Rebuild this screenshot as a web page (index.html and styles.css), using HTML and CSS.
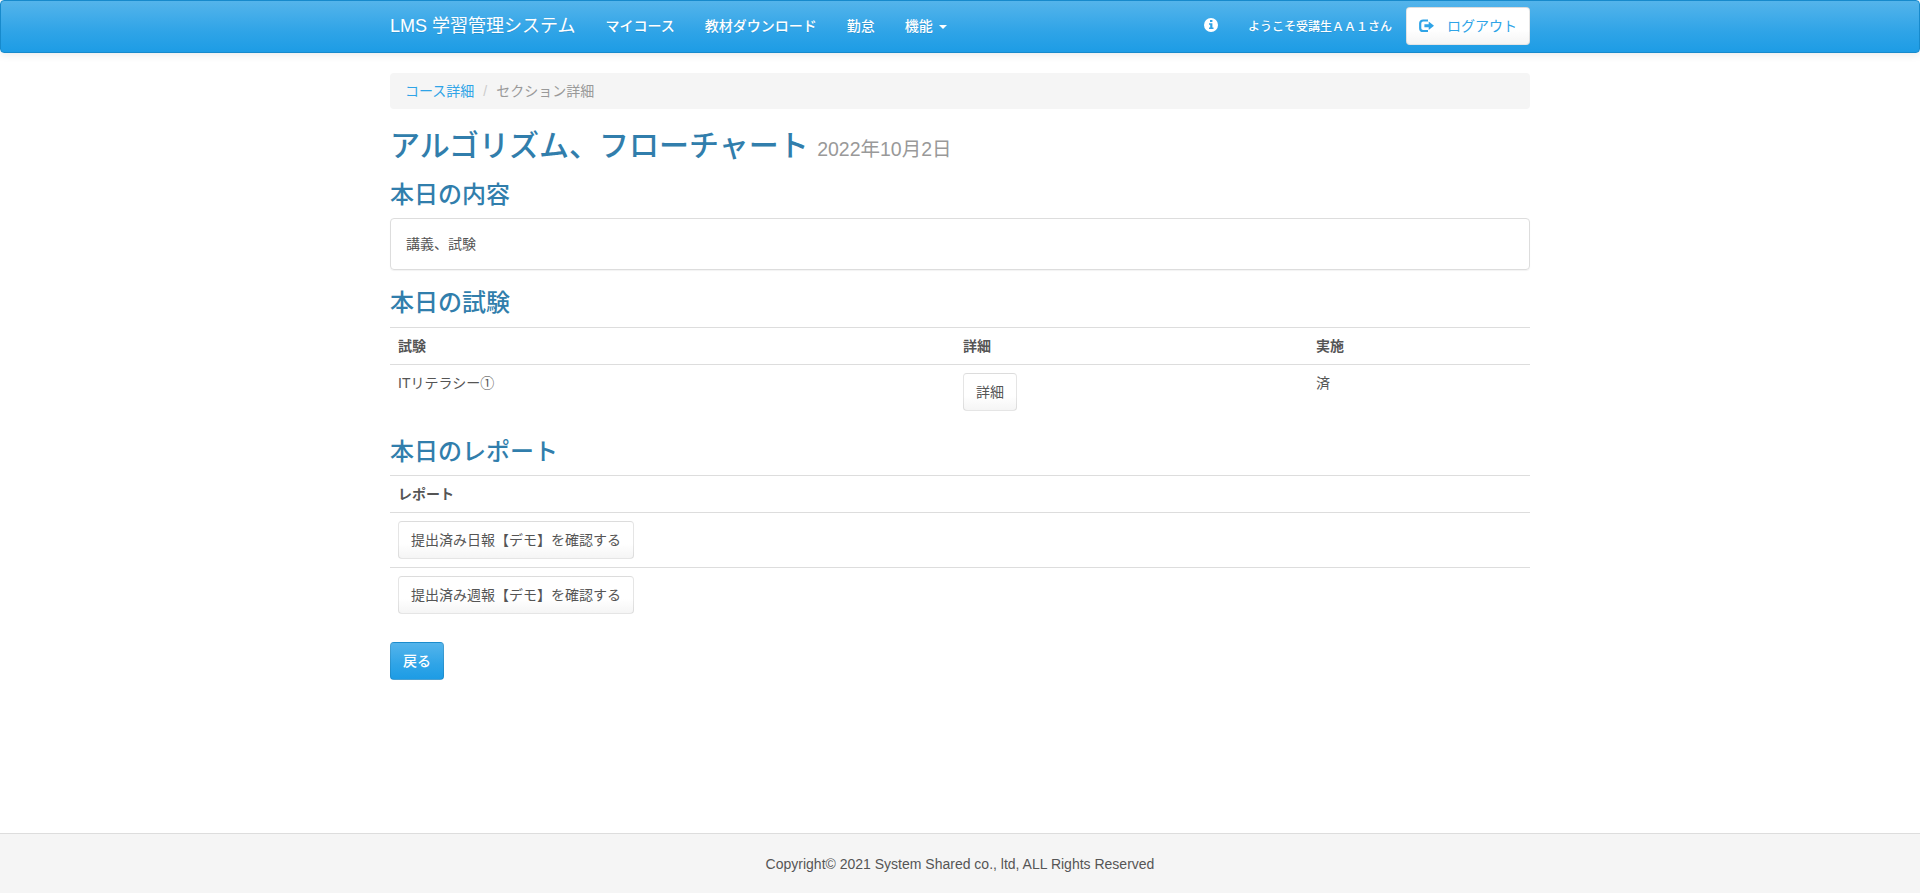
FILE: index.html
```html
<!DOCTYPE html>
<html lang="ja">
<head>
<meta charset="utf-8">
<title>セクション詳細 | LMS 学習管理システム</title>
<link rel="stylesheet" href="styles.css">
</head>
<body>
<nav class="navbar">
  <div class="container navbar-inner">
    <a class="brand">LMS 学習管理システム</a>
    <ul class="nav">
      <li><a>マイコース</a></li>
      <li><a>教材ダウンロード</a></li>
      <li><a>勤怠</a></li>
      <li><a>機能 <b class="caret"></b></a></li>
    </ul>
    <div class="nav-right">
      <svg class="icon info" viewBox="0 0 14 14"><circle cx="7" cy="7" r="7" fill="#fff"/><path d="M6 2h2.400v2H6zM5 5.200h3.400v4.200H9.500V11H5V9.400h1.200V6.800H5z" fill="#2fa4e7"/></svg>
      <span class="welcome">ようこそ受講生ＡＡ１さん</span>
      <a class="btn btn-logout"><svg class="icon" viewBox="0 0 15 14"><path d="M9 1.500H4.200Q1.200 1.500 1.200 4.300v4.900q0 2.800 3 2.800H9" fill="none" stroke="#2fa4e7" stroke-width="2.200"/><path d="M5.400 5.200h4.300V2.400L15 6.800l-5.300 4.300V8.300H5.400z" fill="#2fa4e7"/></svg><span>ログアウト</span></a>
    </div>
  </div>
</nav>
<main class="container">
  <ol class="breadcrumb">
    <li><a>コース詳細</a></li>
    <li class="active">セクション詳細</li>
  </ol>
  <h2>アルゴリズム、フローチャート <small>2022年10月2日</small></h2>
  <h3>本日の内容</h3>
  <div class="panel">講義、試験</div>
  <h3>本日の試験</h3>
  <table class="table exams">
    <tr><th class="col-name">試験</th><th class="col-detail">詳細</th><th>実施</th></tr>
    <tr><td>ITリテラシー①</td><td><a class="btn">詳細</a></td><td>済</td></tr>
  </table>
  <h3>本日のレポート</h3>
  <table class="table">
    <tr><th>レポート</th></tr>
    <tr><td><a class="btn">提出済み日報【デモ】を確認する</a></td></tr>
    <tr><td><a class="btn">提出済み週報【デモ】を確認する</a></td></tr>
  </table>
  <a class="btn btn-primary">戻る</a>
</main>
<footer class="footer">Copyright© 2021 System Shared co., ltd, ALL Rights Reserved</footer>
</body>
</html>
```
FILE: styles.css
```css
* { box-sizing: border-box; }
body {
  margin: 0;
  min-height: 893px;
  display: flex;
  flex-direction: column;
  background: #fff;
  color: #555;
  font: 14px/20px "Liberation Sans", "Noto Sans CJK JP", sans-serif;
}
.container { width: 1140px; margin: 0 auto; }
ul, ol { list-style: none; margin: 0; padding: 0; }

.navbar {
  height: 53px;
  margin-bottom: 20px;
  border: 1px solid #178acc;
  border-radius: 4px;
  background: linear-gradient(#54b4eb, #2fa4e7 60%, #1d9ce5);
  box-shadow: 0 1px 10px rgba(0, 0, 0, .1);
  color: #fff;
  font-weight: 500;
  text-shadow: 0 1px 0 rgba(0, 0, 0, .1);
}
.navbar-inner { display: flex; align-items: center; height: 50px; }
.brand { font-size: 18px; font-weight: 400; margin-right: 15px; }
.nav { display: flex; }
.nav a { display: block; padding: 0 15px; white-space: nowrap; }
.caret {
  display: inline-block;
  margin-left: 2px;
  vertical-align: middle;
  border-top: 4px solid #fff;
  border-left: 4px solid transparent;
  border-right: 4px solid transparent;
}
.nav-right { display: flex; align-items: center; margin-left: auto; }
.icon { display: block; width: 15px; height: 14px; }
.info { width: 14px; margin: 0 30px 2px 0; }
.welcome { margin-right: 14px; padding-top: 2px; font-size: 12px; }

.btn {
  display: inline-block;
  vertical-align: middle;
  height: 38px;
  padding: 8px 12px;
  border: 1px solid rgba(0, 0, 0, .1);
  border-radius: 4px;
  background: linear-gradient(#fff, #fff 60%, #f5f5f5);
  color: #555;
  white-space: nowrap;
}
.btn-logout {
  display: flex;
  align-items: center;
  gap: 13px;
  color: #2fa4e7;
  font-weight: 400;
  text-shadow: none;
}
.btn-logout .icon { margin-top: -1px; }
.btn-primary {
  align-self: flex-start;
  background: linear-gradient(#54b4eb, #2fa4e7 60%, #1d9ce5);
  color: #fff;
  font-weight: 500;
}

.breadcrumb {
  display: flex;
  height: 36px;
  padding: 8px 15px;
  border-radius: 4px;
  background: #f5f5f5;
}
.breadcrumb a { color: #2fa4e7; }
.breadcrumb .active { color: #999; }
.breadcrumb .active::before { content: "/"; padding: 0 9px; color: #ccc; }

h2, h3 { margin: 20px 0 10px; color: #317eac; font-weight: 500; }
h2 { height: 33px; font-size: 30px; line-height: 33px; }
h2 small { color: #999; font-size: 19.5px; font-weight: 400; line-height: 1; }
h3 { height: 26.4px; font-size: 24px; line-height: 26.4px; }
.panel {
  height: 52px;
  padding: 15px;
  border: 1px solid #ddd;
  border-radius: 4px;
  box-shadow: 0 1px 1px rgba(0, 0, 0, .05);
}
.table { width: 100%; margin-bottom: 20px; border-spacing: 0; table-layout: fixed; }
.table th, .table td {
  padding: 8px;
  border-top: 1px solid #ddd;
  text-align: left;
  vertical-align: top;
}
.table th { height: 37px; }
.table .btn { display: block; width: max-content; }
.table .col-name { width: 565px; }
.table .col-detail { width: 353px; }

.footer {
  height: 60px;
  margin-top: auto;
  padding-top: 20px;
  border-top: 1px solid #ddd;
  background: #f5f5f5;
  text-align: center;
}
```
